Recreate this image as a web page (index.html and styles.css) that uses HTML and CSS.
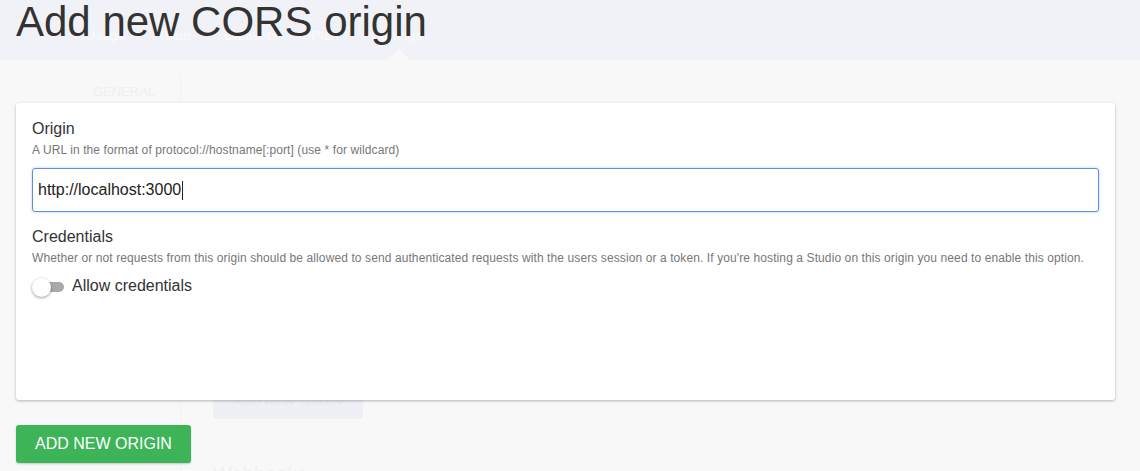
FILE: index.html
```html
<!DOCTYPE html>
<html lang="en">
<head>
<meta charset="utf-8">
<title>Add new CORS origin</title>
<link rel="stylesheet" href="styles.css">
</head>
<body>
  <div class="page">
    <header class="bg-header">
      <nav class="bg-nav">
        <span>Usage</span>
        <span>Team</span>
        <span>Datasets</span>
        <span>Plan</span>
        <span class="active">Settings</span>
      </nav>
    </header>
    <div class="bg-body">
      <aside class="bg-side"><span>GENERAL</span></aside>
      <main class="bg-main">
        <div class="bg-token">ADD NEW TOKEN</div>
        <h2 class="bg-webhooks">Webhooks</h2>
      </main>
    </div>
  </div>

  <div class="overlay">
    <h1 class="title">Add new CORS origin</h1>
    <section class="card">
      <div class="field">
        <div class="label">Origin</div>
        <div class="help">A URL in the format of protocol://hostname[:port] (use * for wildcard)</div>
        <div class="input"><span class="value">http://localhost:3000</span><span class="caret"></span></div>
      </div>
      <div class="field field-cred">
        <div class="label">Credentials</div>
        <div class="help">Whether or not requests from this origin should be allowed to send authenticated requests with the users session or a token. If you're hosting a Studio on this origin you need to enable this option.</div>
        <label class="switch-row">
          <span class="switch"><span class="track"></span><span class="knob"></span></span>
          <span class="switch-label">Allow credentials</span>
        </label>
      </div>
    </section>
    <button class="btn-add">ADD NEW ORIGIN</button>
  </div>
</body>
</html>
```

FILE: styles.css
```css
* { box-sizing: border-box; }

html, body {
  margin: 0;
  padding: 0;
  width: 1140px;
  height: 471px;
  overflow: hidden;
  background: #f8f8f8;
  font-family: "Liberation Sans", Arial, sans-serif;
}

/* ---------- faded background page ---------- */
.page {
  display: flex;
  flex-direction: column;
  height: 471px;
}

.bg-header {
  height: 60px;
  background: #f1f2f7;
}

.bg-nav {
  display: flex;
  gap: 33px;
  padding: 10px 0 0 86px;
  height: 60px;
  align-items: center;
  font-size: 13px;
  font-weight: bold;
  color: #f8f8fb;
}

.bg-nav .active {
  position: relative;
}

.bg-nav .active::after {
  content: "";
  position: absolute;
  left: 15px;
  top: 21px;
  border-left: 12px solid transparent;
  border-right: 12px solid transparent;
  border-bottom: 12px solid #f8f8f8;
}

.bg-body {
  flex: 1;
  display: flex;
}

.bg-side {
  width: 181px;
  border-right: 1px solid #f1f1f1;
  margin-top: 15px;
  padding: 9px 0 0 93px;
  font-size: 13px;
  color: #efefef;
}

.bg-main {
  flex: 1;
  padding: 325px 0 0 32px;
}

.bg-token {
  width: 150px;
  height: 34px;
  background: #eff0f5;
  border-radius: 3px;
  color: #e9eaf0;
  font-size: 13px;
  text-align: center;
  line-height: 34px;
}

.bg-webhooks {
  margin: 44px 0 0;
  font-size: 20px;
  font-weight: normal;
  color: #efefef;
}

/* ---------- modal overlay ---------- */
.overlay {
  position: absolute;
  inset: 0;
  padding: 1px 25px 0 16px;
  display: flex;
  flex-direction: column;
  align-items: flex-start;
}

.title {
  margin: 0;
  font-size: 42px;
  line-height: 42px;
  font-weight: normal;
  color: #333;
}

.card {
  margin-top: 60px;
  width: 1099px;
  height: 297px;
  background: #fff;
  border-radius: 3px;
  box-shadow: 0 1px 3px rgba(0, 0, 0, 0.28);
  padding: 16px;
}

.label {
  font-size: 16px;
  line-height: 20px;
  color: #333;
}

.help {
  margin-top: 4px;
  font-size: 12px;
  letter-spacing: 0.1px;
  line-height: 15px;
  color: #777;
}

.input {
  margin-top: 10px;
  height: 44px;
  border: 1px solid #5b8fe3;
  border-radius: 3px;
  box-shadow: 0 0 3px rgba(91, 143, 227, 0.45);
  padding: 0 5px;
  display: flex;
  align-items: center;
  font-size: 16px;
  color: #222;
}

.caret {
  display: inline-block;
  width: 1px;
  height: 19px;
  background: #222;
  margin-left: 1px;
}

.field-cred {
  margin-top: 15px;
}

.switch-row {
  margin-top: 10px;
  display: flex;
  align-items: center;
  gap: 8px;
  height: 20px;
}

.switch {
  position: relative;
  width: 32px;
  height: 20px;
}

.track {
  position: absolute;
  left: 10px;
  top: 6px;
  width: 22px;
  height: 10px;
  border-radius: 5px;
  background: #a9a9a9;
}

.knob {
  position: absolute;
  left: 0;
  top: 2px;
  width: 19px;
  height: 19px;
  border-radius: 50%;
  background: #fff;
  box-shadow: 0 1px 3px rgba(0, 0, 0, 0.4);
}

.switch-label {
  font-size: 16px;
  line-height: 20px;
  color: #333;
}

.btn-add {
  margin-top: 25px;
  height: 38px;
  padding: 0 19px;
  border: 0;
  border-radius: 3px;
  background: #3db457;
  color: #fff;
  font-family: "Liberation Sans", Arial, sans-serif;
  font-size: 16px;
  box-shadow: 0 1px 2px rgba(0, 0, 0, 0.2);
}
```
